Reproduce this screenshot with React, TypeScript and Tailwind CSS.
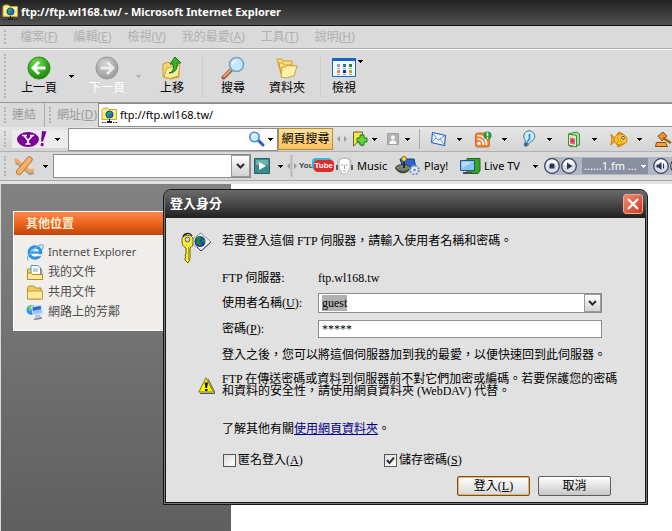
import React, { useEffect, useRef, useState } from 'react';

type IconProps = { className?: string };

const Caret: React.FC<IconProps> = ({ className = 'text-black' }) => (
  <svg width="5" height="3" viewBox="0 0 5 3" shapeRendering="crispEdges" className={`shrink-0 ${className}`}>
    <path d="M0 0h5v1H4v1H3v1H2V2H1V1H0z" fill="currentColor" />
  </svg>
);

const Grip = () => (
  <span className="w-3 shrink-0 self-stretch py-1 pl-1">
    <span className="block h-full w-0 border-l-2 border-dotted border-[#b4b4b4]" />
  </span>
);

const Splitter = ({ bar }: { bar?: boolean }) => (
  <svg width="10" height="24" viewBox="0 0 10 24" className="shrink-0">
    {bar && <path d="M4.500 1v22" stroke="#bcb8b0" strokeWidth="2" />}
    <path d="M3 9v6L0 12zM7 9v6l3-3z" fill="#9b9b9b" />
  </svg>
);

const FtpFolderIcon = () => (
  <svg width="17" height="17" viewBox="0 0 17 17" className="shrink-0">
    <path d="M1 2.500 2.500 1h4L8 2.500h7.500v10H1z" fill="#f8e98a" stroke="#c9a92c" />
    <path d="M2 4h12v1H2z" fill="#fffbd0" />
    <circle cx="8.500" cy="7.500" r="3.600" fill="#1c6fc4" stroke="#123e66" strokeWidth=".8" />
    <path d="M6 6c1-1.600 3-1.600 4-1l-1 2-1.500.6L8 10 6.200 8.700z" fill="#2fae3a" />
    <path d="M8 12h1v2H8zM6 14h5v2H6z" fill="#222" />
    <path d="M1 15.500h4m7 0h4" stroke="#222" strokeDasharray="1.500 1" />
  </svg>
);

const ArrowDisc = ({ back }: { back?: boolean }) => (
  <svg width="24" height="24" viewBox="0 0 24 24">
    <defs>
      <radialGradient id={back ? 'discBack' : 'discNext'} cx=".4" cy=".3" r=".75">
        <stop offset="0" stopColor={back ? '#7fdc63' : '#d2d2d2'} />
        <stop offset=".55" stopColor={back ? '#37ad22' : '#b0b0b0'} />
        <stop offset="1" stopColor={back ? '#1f7d12' : '#989898'} />
      </radialGradient>
    </defs>
    <circle cx="12" cy="12" r="11" fill={`url(#${back ? 'discBack' : 'discNext'})`} stroke={back ? '#2b8a1d' : '#989898'} />
    <path
      d={back ? 'M18.500 12H6.500M12 6l-6 6 6 6' : 'M5.500 12h12M12 6l6 6-6 6'}
      fill="none"
      stroke={back ? '#fff' : '#ececec'}
      strokeWidth="2.800"
    />
  </svg>
);

const UpFolderIcon = () => (
  <svg width="24" height="24" viewBox="0 0 24 24">
    <path d="M3 8l5-2 3 2 8-1v14l-8 2-8-2z" fill="#f3d673" stroke="#c8992c" />
    <path d="M4 21 7 12l13-3-2 11-8 2.500z" fill="#fdeea0" stroke="#d0a437" />
    <path d="M9 17c4-1 5-4 4-9h-3l5-7 6 6h-4c1 6-2 10-8 10z" fill="#35b52a" stroke="#167012" />
  </svg>
);

const MagnifierIcon = () => (
  <svg width="24" height="24" viewBox="0 0 24 24" className="shrink-0">
    <path d="M10 14 2.500 21.500" stroke="#9b5a3c" strokeWidth="4" strokeLinecap="round" />
    <path d="M9.500 14 3 20.500" stroke="#e7a27c" strokeWidth="1.800" strokeLinecap="round" />
    <circle cx="15.500" cy="8.500" r="7" fill="#c3e7fc" stroke="#7c9ccb" strokeWidth="1.600" />
    <path d="M11 8c.5-3 3-4.500 6-4-3 1-4 2.500-5 5z" fill="#fff" />
  </svg>
);

const BlueMagnifierIcon = () => (
  <svg width="17" height="16" viewBox="0 0 17 16" className="shrink-0">
    <path d="m10 9 5 5" stroke="#2e5cb8" strokeWidth="3" strokeLinecap="round" />
    <circle cx="6.500" cy="6" r="4.700" fill="#cfe9ff" stroke="#4a86dd" strokeWidth="1.600" />
    <path d="M4 5.500C4.500 4 6 3.300 7.500 3.500" stroke="#fff" fill="none" strokeWidth="1.200" />
  </svg>
);

const FoldersIcon = () => (
  <svg width="24" height="24" viewBox="0 0 24 24">
    <path d="M2 3h5l1 2h9v10l-11 3z" fill="#f7dc7b" stroke="#cf9d33" />
    <path d="M4 7h4l1 2h8v8L7 20z" fill="#fbe793" stroke="#cf9d33" />
    <path d="m6 21 1-10h4l1-1.500 10 .5-3 10-8 2z" fill="#fdf0a8" stroke="#cf9d33" />
  </svg>
);

const ViewIcon = () => (
  <svg width="24" height="20" viewBox="0 0 24 20" shapeRendering="crispEdges">
    <path d="M.5.500h23v18H.500z" fill="#f4faff" stroke="#1c66c4" />
    <path d="M0 0h24v3H0z" fill="#1763c9" />
    <path d="M5 6h3v3H5z" fill="#9a9ac4" />
    <path d="M11 6h3v3h-3z" fill="#2272cf" />
    <path d="M17 6h3v3h-3z" fill="#169018" />
    <path d="M5 12h3v3H5z" fill="#ef8063" />
    <path d="M11 12h3v3h-3z" fill="#0a2f98" />
    <path d="M17 12h3v3h-3z" fill="#bfa22c" />
    <path d="M5 10.500h3m3 0h3m3 0h3M5 16.500h3m3 0h3m3 0h3" stroke="#a4a4a4" />
  </svg>
);

const YahooLogo = () => (
  <svg width="30" height="18" viewBox="0 0 30 18">
    <ellipse cx="11" cy="9.500" rx="11" ry="7.500" fill="#7b0099" />
    <path d="M5 5.500h5M13 5.500h4M7 5.500l4 5 4.500-5M11 10v4M8.500 14h5" stroke="#fff" strokeWidth="1.700" fill="none" />
    <path d="m25 1 4.500.5L26 11.500h-2zM24 13l2.700.2-.4 3-2.700-.2z" fill="#7b0099" />
  </svg>
);

const BookmarkIcon = () => (
  <svg width="16" height="18" viewBox="0 0 16 18">
    <path d="M1.500 2h9v14L6 12l-4.500 4z" fill="#f8e64c" stroke="#546a30" />
    <path d="M8 5h4v3h3v4h-3v3H8v-3H5V8h3z" fill="#69d63c" stroke="#1c7a17" />
  </svg>
);

const PersonIcon = () => (
  <svg width="12" height="12" viewBox="0 0 12 12">
    <path d="M.5.500h11v11H.500z" fill="#b3b3b3" stroke="#a0a0a0" />
    <circle cx="6" cy="4.500" r="2" fill="#fff" />
    <path d="M2.500 11c0-5 7-5 7 0z" fill="#fff" />
  </svg>
);

const MailIcon = () => (
  <svg width="17" height="16" viewBox="0 0 17 16">
    <path d="m2.500 1.500 13 3-1 10-13-3z" fill="#eef5ff" stroke="#3664bd" strokeWidth="1.200" />
    <path d="m2.500 2 5.500 7 7-4.500M1.500 11.500 6 7m8.500 7L10 8" stroke="#6c93da" fill="none" />
  </svg>
);

const RssIcon = () => (
  <svg width="17" height="17" viewBox="0 0 17 17">
    <rect x=".5" y="2" width="14" height="14" rx="2" fill="#f08038" stroke="#d96621" />
    <circle cx="4" cy="12.500" r="1.700" fill="#fff" />
    <path d="M2.500 8c4 0 6 2 6 6M2.500 4.500c6 0 9 3.500 9 9.500" stroke="#fff" strokeWidth="1.700" fill="none" />
    <circle cx="12.500" cy="4.500" r="4" fill="#27963a" />
    <path d="M12.500 1.500v3.800m0 1v1.400" stroke="#fff" strokeWidth="1.600" />
  </svg>
);

const BulbIcon = () => (
  <svg width="14" height="18" viewBox="0 0 14 18">
    <path d="M2 8a5.500 5.500 0 1 1 8 3c-2 1-3 2-4.500 5l-3-2C4 11 3 10 2 8z" fill="#c8eefb" stroke="#4a6d8e" />
    <path d="M7.500 4v5L5 12" stroke="#298fd0" strokeWidth="1.800" fill="none" />
    <path d="m4 12 2.500 1.500L4 17l-2.500-2z" fill="#44607c" />
  </svg>
);

const BookIcon = () => (
  <svg width="14" height="17" viewBox="0 0 14 17">
    <path d="m1.500 3 8-2 3 2v11l-9 2-2-2z" fill="#a7dca3" stroke="#3c8d3c" />
    <path d="m1.500 3 8 1.500V16l-8-2z" fill="#d7f1b9" stroke="#3c8d3c" />
    <path d="m3 6.500 5 1v6l-5-1z" fill="#ef5d83" />
    <path d="m4.500 8.500 2 .5v2.500l-2-.5z" fill="#8b3d66" />
  </svg>
);

const FishIcon = () => (
  <svg width="18" height="17" viewBox="0 0 18 17">
    <path d="M5 8 1 3l1 5.500L.8 14 5 10z" fill="#fbbd22" stroke="#c9780f" />
    <path d="M7 3.500 9 1l4 2M7 13l1 3 4-2" fill="#f7a51c" stroke="#c9780f" />
    <ellipse cx="10.500" cy="8.500" rx="6.500" ry="5.500" fill="#fdc62c" stroke="#c9780f" />
    <path d="M7.500 6c1 2 1 4 0 6M10.500 9.500c0 2 1 3 3 3" stroke="#e07e14" fill="none" />
    <circle cx="13" cy="6.800" r="1.400" fill="#fff" stroke="#333" strokeWidth=".8" />
  </svg>
);

const GavelIcon = () => (
  <svg width="17" height="17" viewBox="0 0 17 17">
    <path d="m3 5 5-4 4 4-5 5z" fill="#ef952b" stroke="#8c4b0c" />
    <path d="m8 7 8 5" stroke="#a65d16" strokeWidth="2.500" />
    <path d="M1.500 11.500h9l2 4H.500z" fill="#f2a33c" stroke="#8c4b0c" />
  </svg>
);

const ToolsIcon = () => (
  <svg width="21" height="20" viewBox="0 0 21 20">
    <path d="M2 5.500 7 9l9 8 3.500-1" stroke="#9a9a9a" strokeWidth="4" fill="none" />
    <path d="M2 4 7 8l8.500 7 3-.5" stroke="#f4ab60" strokeWidth="3.500" fill="none" strokeLinecap="round" />
    <path d="M15.500 3.500 5 16" stroke="#b56c28" strokeWidth="6" strokeLinecap="round" />
    <path d="M15.500 3.500 5 16" stroke="#f9b369" strokeWidth="4.500" strokeLinecap="round" />
  </svg>
);

const PlayTileIcon = () => (
  <svg width="16" height="16" viewBox="0 0 16 16">
    <path d="M.5.500h15v15H.500z" fill="#398b8d" stroke="#216164" />
    <path d="M2 2h12v5H2z" fill="#6cb2b0" />
    <path d="m5 4 7 4-7 4z" fill="#fff" />
  </svg>
);

const YouTubeLogo = () => (
  <span className="flex shrink-0 items-center font-['Liberation_Sans',sans-serif] text-[8px] leading-3 font-bold">
    <span className="text-[#444]">You</span>
    <span className="rounded-sm bg-[#df2a28] px-px text-white shadow-[-2px_-2px_0_#35b8d6]">Tube</span>
  </span>
);

const HeadphonesIcon = () => (
  <svg width="19" height="18" viewBox="0 0 19 18" className="shrink-0">
    <path d="M4 5c0-5 11-5 11 0v6l-3 6H7l-3-6z" fill="#fff" stroke="#b8b8b8" />
    <path d="M3 9C1 2 6 1 9.500 1S18 2 16 9" stroke="#c4c4c4" strokeWidth="1.500" fill="none" />
    <path d="M1 8h2v5H1zM16 8h2v5h-2z" fill="#5d5d5d" />
    <path d="M6 8h2.500m2 0H13M9.500 8v4M8 14h3" stroke="#a6a6a6" />
  </svg>
);

const JoystickIcon = () => (
  <svg width="26" height="20" viewBox="0 0 26 20" className="shrink-0">
    <path d="M5 3h14l2 9H8z" fill="#2964d8" stroke="#123a91" />
    <ellipse cx="8" cy="12" rx="7.500" ry="3.500" fill="#78856a" stroke="#363d30" />
    <path d="M1 12c1 7 13 7 14 0-3 4-10 4-14 0z" fill="#414a3a" />
    <path d="M9 12V5" stroke="#2b2b2b" strokeWidth="2" />
    <circle cx="9" cy="3" r="2.400" fill="#f6e33c" stroke="#75640a" />
    <circle cx="19.500" cy="14" r="4.200" fill="#eaf1fb" stroke="#7795bd" strokeDasharray="2 1.300" strokeWidth="2.200" />
    <circle cx="19.500" cy="14" r="1.500" fill="#7795bd" />
  </svg>
);

const TvIcon = () => (
  <svg width="21" height="17" viewBox="0 0 21 17" className="shrink-0">
    <path d="M7 .5h13v12l-2 3H7z" fill="#36a51f" stroke="#1a6a10" />
    <path d="M.5 2.500h14v10H.500z" fill="#83c4f8" stroke="#2d5594" />
    <path d="M2 4h11L2 10z" fill="#b7defc" />
    <path d="M3 15h9" stroke="#4a4a4a" strokeWidth="2" />
  </svg>
);

const PlayerButton = ({ label, d }: { label: string; d: string }) => (
  <button type="button" aria-label={label} className="shrink-0">
    <svg width="16" height="16" viewBox="0 0 16 16">
      <circle cx="8" cy="8" r="7.300" fill="#d9deeb" stroke="#373f5c" strokeWidth="1.200" />
      <path d="M2.500 7a5.500 5.500 0 0 1 11 0z" fill="#fff" />
      <path d={d} fill="#28345e" />
    </svg>
  </button>
);

const IeIcon = () => (
  <svg width="18" height="18" viewBox="0 0 18 18" className="shrink-0">
    <circle cx="9" cy="9.500" r="5.700" fill="#e9f7ff" stroke="#3290d8" strokeWidth="3.200" />
    <path d="M4 9.500h10.500" stroke="#3290d8" strokeWidth="2.200" />
    <path d="M12 11.200h5v2H12z" fill="#f0eeea" />
    <path d="M2 17C-1 13 12 1 16.500 2c1.500.5.500 3-.5 4.500" stroke="#62b5ec" strokeWidth="1.300" fill="none" />
  </svg>
);

const DocumentsIcon = () => (
  <svg width="18" height="17" viewBox="0 0 18 17" className="shrink-0">
    <path d="M1.500 5h14l1 10.500h-15z" fill="#f4cf62" stroke="#b98a24" />
    <path d="M5 1.500h7l2.500 2.500v8H5z" fill="#fff" stroke="#5b8cc9" />
    <path d="M7 5h5M7 7h5" stroke="#74a3de" />
    <path d="M1.500 9h4l1 1.500h10v5h-15z" fill="#fdeb9a" stroke="#b98a24" />
  </svg>
);

const FolderIcon = () => (
  <svg width="18" height="17" viewBox="0 0 18 17" className="shrink-0">
    <path d="M1.500 3.500 3 2h5l1.500 2H15v11H1.500z" fill="#f3cc5c" stroke="#b98a24" />
    <path d="M1.500 15V8.500L3 7h13.500v8z" fill="#fdeb9a" stroke="#c59a32" />
  </svg>
);

const NetworkIcon = () => (
  <svg width="18" height="17" viewBox="0 0 18 17" className="shrink-0">
    <circle cx="5.500" cy="6" r="5" fill="#3596e0" />
    <path d="M2 3c2-2 4-2 5-1L5 6 3 7z" fill="#6ed060" />
    <path d="M5.500 2.500 15.500 1l1 8.500-9.500 1z" fill="#8cc8fa" stroke="#d6dff0" />
    <path d="M6.500 3.500 14.500 2l.5 3-8 2z" fill="#3168c8" />
    <path d="m9 11 5-.5 1.500 3-6 1.500z" fill="#bac3d6" />
    <path d="m8 15.500 8-1.500" stroke="#7c88a5" strokeWidth="1.500" />
  </svg>
);

const KeyIcon = () => (
  <svg width="32" height="32" viewBox="0 0 32 32" className="shrink-0">
    <path d="m10 9 11-8 10 9-10 9z" fill="#f3f3f3" stroke="#8b8b8b" />
    <path d="m31 10-10 9-4-4" stroke="#444" fill="none" />
    <circle cx="20" cy="9.500" r="5.500" fill="#1a3aa8" />
    <path d="M17 5c3-2 5 0 4 2l-2 2 3 2-2 3-4-3z" fill="#188a3f" />
    <path d="M22 6l3 2v3l-3-1z" fill="#188a3f" />
    <path d="M2 7c0-5 11-5 11 0v4c0 3-1.500 4-3 5v11l-2 4-3-3v-2l1-1-1-2 1-1v-6c-4-2-4-5-4-9z" fill="#f6ec3b" stroke="#6c6400" />
    <path d="M8.500 15v13" stroke="#b6aa14" />
    <circle cx="7.500" cy="7.500" r="2.300" fill="#d9d9d9" stroke="#555" />
    <path d="M3 5c1-4 7-5 9-1" stroke="#222" fill="none" strokeWidth="1.300" />
  </svg>
);

const WarningIcon = () => (
  <svg width="17" height="17" viewBox="0 0 17 17" className="shrink-0">
    <path d="M2 16.500h14.500v-2L10 2" stroke="#555" fill="none" />
    <path d="M8 .8 15.500 15H.800z" fill="#fdf800" stroke="#7d7a00" strokeLinejoin="round" />
    <path d="M6.500 5.500h3.500L9 11H7.500zM7 12h2.500v2H7z" fill="#111" />
  </svg>
);

const Chevron = () => (
  <svg width="9" height="6" viewBox="0 0 9 6">
    <path d="m1 1 3.500 3.500L8 1" fill="none" stroke="#2b2b2b" strokeWidth="2" />
  </svg>
);

const menus = [
  ['檔案', 'F'],
  ['編輯', 'E'],
  ['檢視', 'V'],
  ['我的最愛', 'A'],
  ['工具', 'T'],
  ['說明', 'H'],
];

const yahooTools = [
  { name: '郵件', icon: <MailIcon /> },
  { name: 'RSS', icon: <RssIcon /> },
  { name: '知識', icon: <BulbIcon /> },
  { name: '相簿', icon: <BookIcon /> },
  { name: '交友', icon: <FishIcon /> },
  { name: '拍賣', icon: <GavelIcon /> },
];

const places = [
  { name: 'Internet Explorer', icon: <IeIcon />, size: 'text-[11px]' },
  { name: '我的文件', icon: <DocumentsIcon />, size: 'text-xs' },
  { name: '共用文件', icon: <FolderIcon />, size: 'text-xs' },
  { name: '網路上的芳鄰', icon: <NetworkIcon />, size: 'text-xs' },
];

interface ToolButtonProps {
  label: string;
  icon: React.ReactNode;
  className: string;
  disabled?: boolean;
}

const ToolButton: React.FC<ToolButtonProps> = ({ label, icon, className, disabled }) => (
  <button
    type="button"
    disabled={disabled}
    className={`flex shrink-0 flex-col items-center ${className} ${disabled ? 'text-white' : 'text-black'}`}
  >
    <span className="flex h-6 items-center">{icon}</span>
    <span className="leading-4">{label}</span>
  </button>
);

const CheckField = ({ id, text, hotkey, initial }: { id: string; text: string; hotkey: string; initial: boolean }) => {
  const [checked, setChecked] = useState(initial);
  return (
    <span className="flex items-center gap-[2px]">
      <span className="grid size-[14px] place-items-center">
        <input
          id={id}
          type="checkbox"
          checked={checked}
          onChange={(e) => setChecked(e.target.checked)}
          className="col-start-1 row-start-1 size-[13px] appearance-none border border-[#555] bg-linear-to-br from-[#dcdcdc] to-white"
        />
        {checked && (
          <svg width="9" height="9" viewBox="0 0 9 9" className="pointer-events-none col-start-1 row-start-1">
            <path d="M1 4l2.500 3L8 1.500" fill="none" stroke="#333" strokeWidth="2" />
          </svg>
        )}
      </span>
      <label htmlFor={id}>
        {text}(<u>{hotkey}</u>)
      </label>
    </span>
  );
};

const LoginDialog = () => {
  const userRef = useRef<HTMLInputElement>(null);
  const [user, setUser] = useState('guest');
  const [password, setPassword] = useState('*****');

  useEffect(() => {
    userRef.current?.focus();
    userRef.current?.select();
  }, []);

  return (
    <div
      role="dialog"
      aria-labelledby="dialog-title"
      className="absolute top-[189px] right-6 left-[163px] rounded-t-lg border border-[#161616] bg-[#787878] px-px pb-px font-['Liberation_Serif','Noto_Sans_CJK_TC',serif] text-xs text-black"
    >
      <div className="flex h-7 items-center justify-between rounded-t-md bg-linear-to-b from-[#6b6b6b] via-[#484848] to-[#202020] pr-[3px] pl-[5px]">
        <h2 id="dialog-title" className="text-[13px] font-bold text-white">登入身分</h2>
        <button
          type="button"
          aria-label="關閉"
          className="grid size-5 place-items-center rounded-[3px] border border-[#f0a898] bg-linear-to-br from-[#f08a72] to-[#cf3412]"
        >
          <svg width="12" height="12" viewBox="0 0 12 12">
            <path d="m1 1 10 10M11 1 1 11" stroke="#fff" strokeWidth="2.200" />
          </svg>
        </button>
      </div>

      <form onSubmit={(e) => e.preventDefault()} className="border border-t-0 border-[#161616] bg-[#e1e1e1] pt-3 pb-[6px]">
        <div className="flex h-9">
          <span className="w-14 shrink-0 pt-[2px] pl-[14px]"><KeyIcon /></span>
          <p className="leading-[22px]">若要登入這個 FTP 伺服器，請輸入使用者名稱和密碼。</p>
        </div>
        <div className="pr-[43px] pl-14">
          <div className="flex h-6 items-center">
            <span className="w-24">FTP 伺服器:</span>
            <span>ftp.wl168.tw</span>
          </div>
          <div className="flex h-[26px] items-center">
            <label htmlFor="user" className="w-24 shrink-0">使用者名稱(<u>U</u>):</label>
            <span className="flex h-5 flex-1 border border-[#8d8d8d] bg-white">
              <input
                id="user"
                ref={userRef}
                value={user}
                onChange={(e) => setUser(e.target.value)}
                className="min-w-0 flex-1 px-[3px] outline-none selection:bg-[#b0b0b0] selection:text-black"
              />
              <button
                type="button"
                aria-label="展開"
                className="grid w-[17px] place-items-center border border-[#999] bg-linear-to-b from-white to-[#d4d4d4]"
              >
                <Chevron />
              </button>
            </span>
          </div>
          <div className="flex h-[26px] items-center">
            <label htmlFor="password" className="w-24 shrink-0">密碼(<u>P</u>):</label>
            <input
              id="password"
              value={password}
              onChange={(e) => setPassword(e.target.value)}
              className="h-[18px] min-w-0 flex-1 border border-[#8d8d8d] bg-white px-[3px] outline-none"
            />
          </div>
        </div>
        <p className="pl-14 leading-[26px]">登入之後，您可以將這個伺服器加到我的最愛，以便快速回到此伺服器。</p>
        <div className="mt-[5px] flex items-center pr-5">
          <span className="w-14 shrink-0 pl-8"><WarningIcon /></span>
          <p className="leading-3">FTP 在傳送密碼或資料到伺服器前不對它們加密或編碼。若要保護您的密碼和資料的安全性，請使用網頁資料夾 (WebDAV) 代替。</p>
        </div>
        <p className="mt-5 pl-14 leading-6">
          了解其他有關<a href="#webdav" className="text-[#000080] underline">使用網頁資料夾</a>。
        </p>
        <div className="mt-[6px] grid h-[26px] grid-cols-[161px_1fr] items-center pl-14">
          <CheckField id="anonymous" text="匿名登入" hotkey="A" initial={false} />
          <CheckField id="save" text="儲存密碼" hotkey="S" initial />
        </div>
        <div className="mt-[3px] flex justify-end gap-2 pr-[34px]">
          <button
            type="submit"
            className="h-5 w-[73px] rounded-xs border border-[#6b5535] bg-linear-to-b from-white to-[#d8d8d8] leading-4 shadow-[inset_0_0_0_1px_#f2b24f]"
          >
            登入(<u>L</u>)
          </button>
          <button type="button" className="h-5 w-[73px] rounded-xs border border-[#5e5e5e] bg-linear-to-b from-white to-[#c6c6c6] leading-4">
            取消
          </button>
        </div>
      </form>
    </div>
  );
};

const App: React.FC = () => {
  return (
    <div className="relative flex min-h-screen flex-col overflow-hidden bg-[#dadada] font-['Noto_Sans','Noto_Sans_CJK_TC',sans-serif] text-xs text-black">
      <header className="flex h-[26px] items-center gap-[2px] border-b border-[#111] bg-linear-to-b from-[#232323] to-[#525252] pl-[2px]">
        <FtpFolderIcon />
        <h1 className="text-[11px] font-bold whitespace-nowrap text-white">ftp://ftp.wl168.tw/ - Microsoft Internet Explorer</h1>
      </header>

      <nav className="flex h-[23px] items-center border-b border-[#acacac] text-[#b0b0b0]">
        <Grip />
        <div className="flex gap-4 pl-2">
          {menus.map(([name, hotkey]) => (
            <button key={name} type="button" className="whitespace-nowrap">
              {name}(<u>{hotkey}</u>)
            </button>
          ))}
        </div>
      </nav>

      <div className="flex h-[54px] items-center border-t border-b border-t-white border-b-[#999]">
        <Grip />
        <ToolButton className="w-[54px]" label="上一頁" icon={<ArrowDisc back />} />
        <span className="w-[14px] pl-[3px]"><Caret /></span>
        <ToolButton className="w-[54px]" label="下一頁" icon={<ArrowDisc />} disabled />
        <span className="w-4 pl-[2px]"><Caret className="text-[#b0b0b0]" /></span>
        <ToolButton className="w-11" label="上移" icon={<UpFolderIcon />} />
        <span className="mx-2 h-11 w-px bg-[#cfcfcf]" />
        <ToolButton className="w-11" label="搜尋" icon={<MagnifierIcon />} />
        <ToolButton className="w-16" label="資料夾" icon={<FoldersIcon />} />
        <span className="mx-px h-11 w-px bg-[#cfcfcf]" />
        <ToolButton className="w-11" label="檢視" icon={<ViewIcon />} />
        <span className="-ml-2 self-start pt-[10px]"><Caret /></span>
      </div>

      <div className="flex h-6 items-stretch text-[#9a9a9a]">
        <Grip />
        <span className="w-8 self-center">連結</span>
        <span className="border-l border-[#aaa]" />
        <Grip />
        <label htmlFor="address" className="w-[41px] self-center whitespace-nowrap">網址(<u>D</u>)</label>
        <span className="flex min-w-0 flex-1 items-center gap-[2px] border border-r-0 border-[#8d8d8d] bg-white pl-[2px]">
          <FtpFolderIcon />
          <input id="address" defaultValue="ftp://ftp.wl168.tw/" className="min-w-0 flex-1 text-[11px] text-black outline-none" />
        </span>
      </div>

      <div className="flex h-[25px] items-center border-b border-[#b0b0b0] bg-linear-to-b from-[#e6e6e6] to-[#d4d4d4]">
        <Grip />
        <button type="button" aria-label="Yahoo!" className="flex w-14 shrink-0 items-center gap-2 bg-[#ececec] pl-[5px]">
          <YahooLogo />
          <Caret />
        </button>
        <span className="flex h-[23px] w-[210px] shrink-0 items-center gap-[3px] border border-[#8d8d8d] bg-white pr-1">
          <input aria-label="搜尋" className="min-w-0 flex-1 px-1 outline-none" />
          <BlueMagnifierIcon />
          <Caret />
        </span>
        <button
          type="button"
          className="h-[22px] w-[55px] shrink-0 border border-[#b68d3e] bg-linear-to-b from-[#ffe2a0] to-[#fbc25a] whitespace-nowrap"
        >
          網頁搜尋
        </button>
        <span className="pl-1"><Splitter /></span>
        <button type="button" aria-label="書籤" className="ml-[5px] flex shrink-0 items-center gap-1"><BookmarkIcon /><Caret /></button>
        <button type="button" aria-label="登入" className="ml-[10px] flex shrink-0 items-center gap-[6px]"><PersonIcon /><Caret /></button>
        <span className="ml-[9px] h-5 w-px shrink-0 bg-[#aaa]" />
        <div className="flex pl-2">
          {yahooTools.map(({ name, icon }) => (
            <button key={name} type="button" aria-label={name} className="flex w-[45px] shrink-0 items-center gap-2">
              <span className="flex w-[21px] justify-center">{icon}</span>
              <Caret />
            </button>
          ))}
        </div>
      </div>

      <div className="flex h-[29px] items-center border-b border-[#a8a8a8] text-[11px]">
        <Grip />
        <button type="button" aria-label="工具列" className="flex w-[41px] shrink-0 items-center gap-2 pl-[2px]">
          <ToolsIcon />
          <Caret />
        </button>
        <span className="flex h-6 w-[198px] shrink-0 border border-[#8d8d8d] bg-white">
          <input aria-label="關鍵字" className="min-w-0 flex-1 px-1 outline-none" />
          <button type="button" aria-label="展開" className="grid w-[19px] place-items-center border border-[#999] bg-linear-to-b from-white to-[#d0d0d0]">
            <Chevron />
          </button>
        </span>
        <button type="button" aria-label="播放" className="ml-[3px] flex shrink-0 items-center gap-2"><PlayTileIcon /><Caret /></button>
        <span className="shrink-0 pl-1"><Splitter bar /></span>
        <button type="button" className="ml-[2px] w-9 shrink-0"><YouTubeLogo /></button>
        <button type="button" className="flex w-[60px] shrink-0 items-center gap-[3px]"><HeadphonesIcon />Music</button>
        <button type="button" className="flex w-[65px] shrink-0 items-center gap-[3px]"><JoystickIcon />Play!</button>
        <button type="button" className="flex w-[84px] shrink-0 items-center gap-[3px] whitespace-nowrap">
          <TvIcon />
          <span className="flex-1 text-left">Live TV</span>
          <span className="pr-[6px]"><Caret /></span>
        </button>
        <div className="flex h-[18px] shrink-0 items-center gap-px rounded-l-full bg-[#b3b7c4]">
          <PlayerButton label="停止" d="M5.500 5.500h5v5h-5z" />
          <PlayerButton label="播放電台" d="m6 4.500 5.500 3.500L6 11.500z" />
          <button type="button" className="mx-1 flex h-4 w-[66px] items-center justify-between bg-[#8b90a0] px-[2px] whitespace-nowrap text-white">
            ......1.fm ...
            <Caret className="text-white" />
          </button>
          <PlayerButton label="音量" d="M3.500 6.500h2L8.500 4v8L5.500 9.500h-2zM10 5.500h1v5h-1z" />
          <PlayerButton label="設定" d="M7 4h2v8H7z" />
        </div>
      </div>

      <main className="ml-px flex flex-1 border-t-[3px] border-[#e2e2e2] bg-white">
        <aside className="w-[230px] bg-linear-to-b from-[#828282] to-[#5f5f5f] pt-[27px] pl-3">
          <section className="border border-white bg-[#f0eeea]">
            <h2 className="flex h-[23px] items-center bg-linear-to-b from-[#ff8748] via-[#ec641c] to-[#bd4408] pl-3 font-bold text-[#fff0d8]">
              其他位置
            </h2>
            <ul className="pt-[7px] pb-2 pl-3 text-[#4c4c4c]">
              {places.map(({ name, icon, size }) => (
                <li key={name}>
                  <a href="#places" className={`flex h-5 items-center gap-1 ${size}`}>
                    {icon}
                    {name}
                  </a>
                </li>
              ))}
            </ul>
          </section>
        </aside>
      </main>

      <LoginDialog />
    </div>
  );
};

export default App;
